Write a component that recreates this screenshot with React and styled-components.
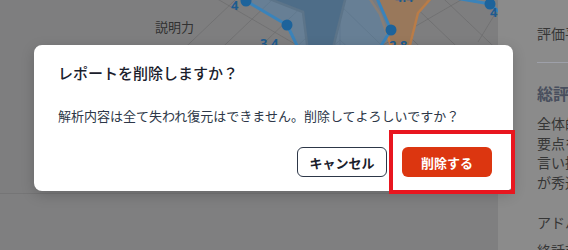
import React from 'react';
import styled, { createGlobalStyle } from 'styled-components';

const GlobalStyle = createGlobalStyle`
  html, body {
    margin: 0;
    padding: 0;
    background: #7f7f80;
    font-family: "Noto Sans CJK JP", "Noto Sans", sans-serif;
  }
`;

const Page = styled.div`
  position: relative;
  display: flex;
  width: 568px;
  height: 250px;
  overflow: hidden;
`;

const Main = styled.div`
  flex: 1;
  display: flex;
  flex-direction: column;
  background: #858586;
`;

const ChartCard = styled.div`
  height: 193px;
  background: #848485;
  border-bottom: 1px solid #7a7a7b;
`;

const Rest = styled.div`
  flex: 1;
  background: #858586;
`;

const Side = styled.aside`
  width: 31px;
  padding-left: 39px;
  background: #919191;
  overflow: hidden;
  white-space: nowrap;
  color: #393939;
  font-size: 14px;
`;

const SideLabel = styled.div`
  margin-top: 23px;
  line-height: 20px;
`;

const Divider = styled.div`
  margin-top: 19px;
  width: 200px;
  height: 1px;
  background: #a5a7b0;
`;

const SideHeading = styled.div`
  margin-top: 18px;
  font-size: 16px;
  font-weight: 700;
  line-height: 24px;
  color: #4d5362;
`;

const Paragraph = styled.div`
  margin-top: 9px;
  line-height: 19.5px;
`;

const SideNext = styled.div`
  margin-top: ${p => p.$gap}px;
  line-height: 20px;
`;

const Backdrop = styled.div`
  position: absolute;
  inset: 0;
  background: rgba(0, 0, 0, 0.04);
  padding: 45px 0 0 34px;
`;

const Dialog = styled.div`
  width: 479px;
  box-sizing: border-box;
  background: #fff;
  border-radius: 8px;
  padding: 16px 21px 14px 24px;
  box-shadow: 0 4px 14px rgba(0, 0, 0, 0.18);
`;

const Title = styled.h2`
  margin: 0;
  font-size: 15px;
  font-weight: 500;
  line-height: 24px;
  color: #1a202c;
`;

const Message = styled.p`
  margin: 21px 0 0;
  font-size: 13px;
  line-height: 20px;
  color: #2d3748;
`;

const Actions = styled.div`
  display: flex;
  justify-content: flex-end;
  gap: 15px;
  margin-top: 21px;
`;

const Button = styled.button`
  width: 90px;
  height: 30px;
  border-radius: 6px;
  font-family: inherit;
  font-size: 13px;
  font-weight: 700;
  cursor: pointer;
  border: ${p => (p.$danger ? 'none' : '1px solid #2d3748')};
  background: ${p => (p.$danger ? '#dc3610' : '#fff')};
  color: ${p => (p.$danger ? '#fff' : '#1a202c')};
`;

const Marked = styled.span`
  position: relative;
  display: inline-flex;
`;

const Highlight = styled.span`
  position: absolute;
  left: -13px;
  top: -17px;
  right: -23px;
  bottom: -17px;
  border: 4px solid #e8161f;
  pointer-events: none;
`;

const Chart = () => (
  <svg width="498" height="60" viewBox="0 0 498 60">
    <g stroke="#727273" strokeWidth="0.8" fill="none">
      <polygon points="340,40 372,70 340,110 308,70" />
      <polygon points="340,5 405,68 340,150 275,68" />
      <polygon points="340,-30 440,66 340,190 240,66" />
      <polygon points="340,-65 475,64 340,230 205,64" />
      <polygon points="340,-100 510,62 340,270 170,62" />
      <line x1="340" y1="70" x2="340" y2="-100" />
      <line x1="340" y1="70" x2="150" y2="-40" />
      <line x1="340" y1="70" x2="530" y2="-40" />
      <line x1="340" y1="70" x2="200" y2="60" />
      <line x1="340" y1="70" x2="480" y2="60" />
      <line x1="495" y1="14" x2="478" y2="42" />
    </g>
    <polygon
      points="262,-4 303,12 309,60 330,60 346,-4"
      fill="#55616c"
      stroke="#6d6d6d"
      strokeWidth="2.5"
    />
    <polygon
      points="368,-4 380,14 396,60 410,45 418,13 433,-4"
      fill="#a07d5f"
      stroke="#c2824a"
      strokeWidth="2.5"
    />
    <polygon
      points="180,-30 246,1 287,25 304,60 372,60 391,30 376,-4"
      fill="rgba(80,135,185,0.45)"
      stroke="#3d89c2"
      strokeWidth="3"
      strokeLinejoin="round"
    />
    <polyline
      points="455,-2 490,4 520,30"
      fill="none"
      stroke="#3d89c2"
      strokeWidth="3"
    />
    <g fill="#1f68a2">
      <circle cx="246" cy="1" r="5.5" />
      <circle cx="287" cy="25" r="5.5" />
      <circle cx="391" cy="30" r="5.5" />
      <circle cx="490" cy="4" r="5.5" />
    </g>
    <g fill="#1f5f95" fontSize="13" fontWeight="700" fontFamily="'Noto Sans', sans-serif">
      <text x="231" y="10">4</text>
      <text x="260" y="48">3.4</text>
      <text x="389" y="50">2.8</text>
      <text x="395" y="2">4.4</text>
      <text x="490" y="17">4.</text>
    </g>
    <text x="155" y="32" fontSize="13" fill="#333" fontFamily="'Noto Sans CJK JP', sans-serif">
      説明力
    </text>
  </svg>
);

export default function App() {
  return (
    <>
      <GlobalStyle />
      <Page>
        <Main>
          <ChartCard>
            <Chart />
          </ChartCard>
          <Rest />
        </Main>
        <Side>
          <SideLabel>評価平均</SideLabel>
          <Divider />
          <SideHeading>総評</SideHeading>
          <Paragraph>
            全体的に
            <br />
            要点を押さえ
            <br />
            言い換え
            <br />
            が秀逸
          </Paragraph>
          <SideNext $gap={20}>アドバイス</SideNext>
          <SideNext $gap={8}>終話前</SideNext>
        </Side>
        <Backdrop>
          <Dialog role="dialog">
            <Title>レポートを削除しますか？</Title>
            <Message>解析内容は全て失われ復元はできません。削除してよろしいですか？</Message>
            <Actions>
              <Button>キャンセル</Button>
              <Marked>
                <Button $danger>削除する</Button>
                <Highlight />
              </Marked>
            </Actions>
          </Dialog>
        </Backdrop>
      </Page>
    </>
  );
}
